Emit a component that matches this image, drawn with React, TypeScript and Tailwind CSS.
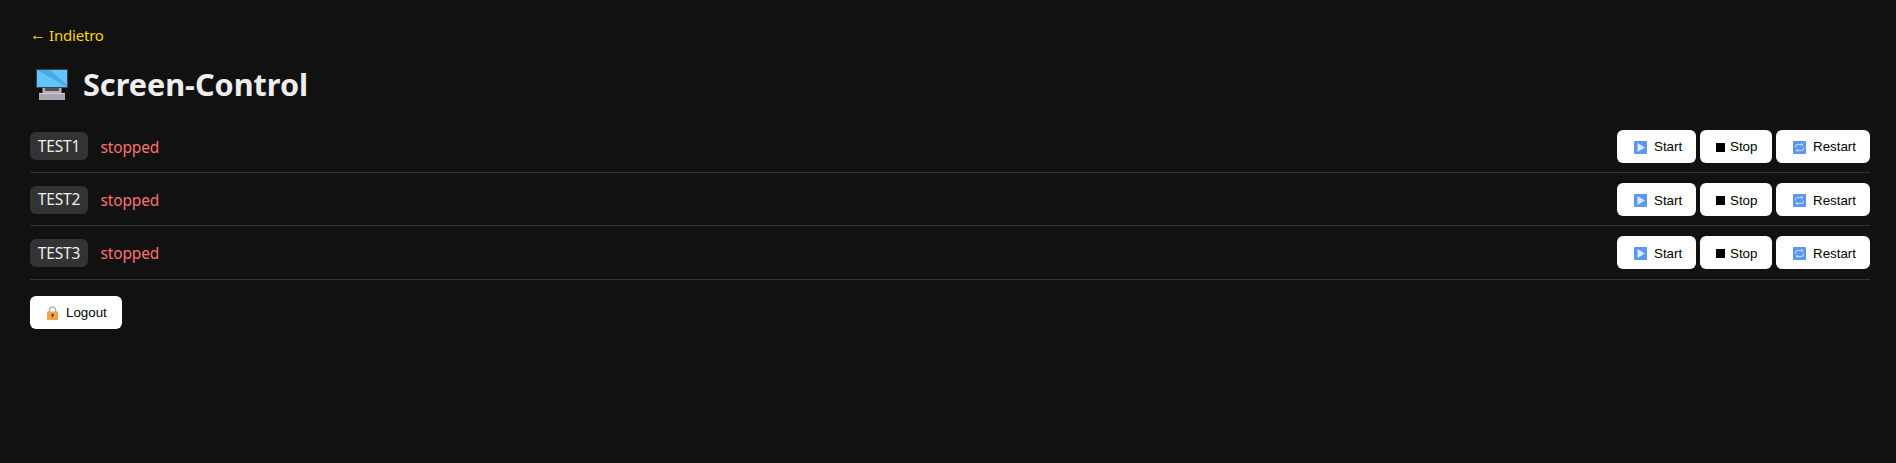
const services = ["TEST1", "TEST2", "TEST3"];

function PlayIcon() {
  return (
    <svg width="13" height="13" viewBox="0 0 13 13" className="shrink-0">
      <rect width="13" height="13" rx="1" fill="#5b96f0" />
      <path d="M3.5 2 L11 6.5 L3.5 11 Z" fill="#dbe8fb" />
    </svg>
  );
}

function StopIcon() {
  return <span className="block w-[9px] h-[9px] bg-black shrink-0" />;
}

function RestartIcon() {
  return (
    <svg width="13" height="13" viewBox="0 0 13 13" fill="none" className="shrink-0">
      <rect width="13" height="13" rx="1" fill="#5b96f0" />
      <path d="M2.6 6.4 V5 Q2.6 3.6 4.2 3.6 H9.8 M8.4 2.3 L10 3.6 L8.4 4.9" stroke="#cfe0fa" strokeWidth="1" />
      <path d="M10.4 6.6 V8 Q10.4 9.4 8.8 9.4 H3.2 M4.6 8.1 L3 9.4 L4.6 10.7" stroke="#cfe0fa" strokeWidth="1" />
    </svg>
  );
}

function MonitorIcon() {
  return (
    <svg width="32" height="31" viewBox="0 0 32 31" className="shrink-0">
      <rect x="0" y="0" width="32" height="19" fill="#3a4250" />
      <rect x="1" y="1" width="30" height="17" fill="#62c4f8" />
      <path d="M1 1 H14 L31 16 V18 L1 1 Z" fill="#3f9fe6" opacity="0.7" />
      <rect x="6.5" y="19" width="19" height="5" fill="#b5b2ba" />
      <rect x="9" y="19" width="14" height="3" fill="#55525a" />
      <rect x="3" y="24" width="26" height="7" fill="#a9a6b0" />
      <rect x="3" y="24" width="26" height="1" fill="#cfcdd4" />
    </svg>
  );
}

function LockIcon() {
  return (
    <svg width="11" height="14" viewBox="0 0 11 14" className="shrink-0">
      <path d="M2.5 6 V4 a3 3 0 0 1 6 0 V6" fill="none" stroke="#b5b5bd" strokeWidth="1.6" />
      <rect x="0" y="5.5" width="11" height="8.5" rx="0.5" fill="#f2a24a" />
      <circle cx="5.5" cy="9" r="1.2" fill="#5a3a1c" />
      <rect x="5" y="9" width="1" height="2.4" fill="#5a3a1c" />
    </svg>
  );
}

export default function App() {
  return (
    <div className="h-[463px] overflow-hidden bg-[#111111] text-[#eeeeee] pl-[30px] pr-[26px] pt-[23px] font-['Noto_Sans',sans-serif]">
      <a href="#" className="flex items-center text-[15px] tracking-[-0.2px] leading-[24px] text-[#ffd700]">
        <span className="w-[19px] text-[16px] font-['Liberation_Sans',sans-serif]">←</span>
        Indietro
      </a>

      <h1 className="flex items-center mt-[11px] h-[53px] text-[30.6px] font-bold leading-none">
        <span className="ml-[6px] mr-[15px]">
          <MonitorIcon />
        </span>
        Screen-Control
      </h1>

      <div className="mt-[8.6px]">
        {services.map((name) => (
          <div
            key={name}
            className="flex items-center justify-between h-[53.33px] pt-px border-b border-[#333333]"
          >
            <div className="flex items-center gap-[12.5px]">
              <span className="flex items-center justify-center w-[58px] h-[28px] pt-[1px] rounded-[6px] bg-[#333333] text-[15.5px] tracking-[-0.1px]">
                {name}
              </span>
              <span className="pt-[2px] text-[15.5px] tracking-[-0.15px] text-[#ff7070]">stopped</span>
            </div>
            <div className="flex gap-[4px] font-['Liberation_Sans',sans-serif] text-[13.33px] text-black">
              <button className="flex items-center w-[79px] h-[33px] pt-[2px] pl-[17px] gap-[7px] rounded-[6px] bg-white">
                <PlayIcon />
                Start
              </button>
              <button className="flex items-center w-[72px] h-[33px] pt-[2px] pl-[16px] gap-[5px] rounded-[6px] bg-white">
                <StopIcon />
                Stop
              </button>
              <button className="flex items-center w-[94px] h-[33px] pt-[2px] pl-[17px] gap-[7px] rounded-[6px] bg-white">
                <RestartIcon />
                Restart
              </button>
            </div>
          </div>
        ))}
      </div>

      <button className="flex items-center w-[92px] h-[33px] mt-[16.4px] pt-[2px] pl-[17px] gap-[8px] rounded-[6px] bg-white font-['Liberation_Sans',sans-serif] text-[13.33px] text-black">
        <LockIcon />
        Logout
      </button>
    </div>
  );
}
